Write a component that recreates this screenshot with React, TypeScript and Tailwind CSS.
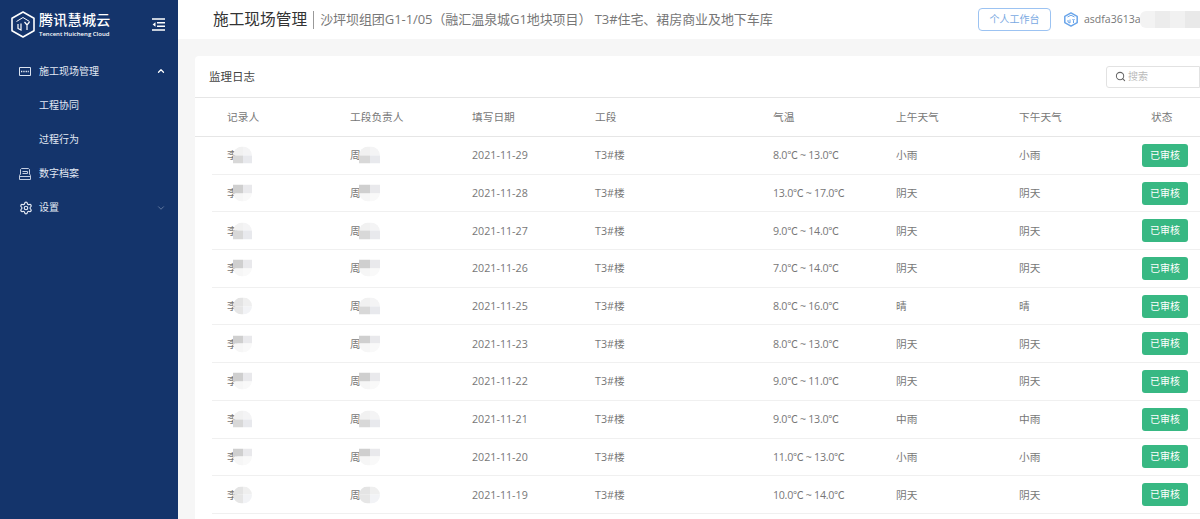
import { ChevronDown, ChevronUp, Search, Settings } from "lucide-react";

const COLUMNS = [
  { label: "记录人", cls: "w-[138px] shrink-0 pl-[15px]" },
  { label: "工段负责人", cls: "w-[122px] shrink-0" },
  { label: "填写日期", cls: "w-[123px] shrink-0" },
  { label: "工段", cls: "w-[178px] shrink-0" },
  { label: "气温", cls: "w-[123px] shrink-0" },
  { label: "上午天气", cls: "w-[123px] shrink-0" },
  { label: "下午天气", cls: "w-[123px] shrink-0" },
];

// names are blotted out in the original, each row has its own mosaic
const BLOTS = {
  a: { shape: "rounded-t-[9px]", cells: ["bg-[#f1f1f1]", "bg-[#f4f4f5]", "bg-[#d8d8d8]", "bg-[#e8e9ed]"] },
  b: { shape: "rounded-b-[9px]", cells: ["bg-[#cfcfcf]", "bg-[#e9e9ec]", "bg-[#f6f6f6]", "bg-[#f9f9f9]"] },
  c: { shape: "rounded-[10px]", cells: ["bg-[#e4e4e4]", "bg-[#efefef]", "bg-[#e6e6e6]", "bg-[#f2f3f6]"] },
};

type BlotKey = keyof typeof BLOTS;

const ROWS: { date: string; temp: string; am: string; pm: string; li: BlotKey; zhou: BlotKey }[] = [
  { date: "2021-11-29", temp: "8.0℃ ~ 13.0℃", am: "小雨", pm: "小雨", li: "a", zhou: "a" },
  { date: "2021-11-28", temp: "13.0℃ ~ 17.0℃", am: "阴天", pm: "阴天", li: "b", zhou: "b" },
  { date: "2021-11-27", temp: "9.0℃ ~ 14.0℃", am: "阴天", pm: "阴天", li: "a", zhou: "a" },
  { date: "2021-11-26", temp: "7.0℃ ~ 14.0℃", am: "阴天", pm: "阴天", li: "b", zhou: "b" },
  { date: "2021-11-25", temp: "8.0℃ ~ 16.0℃", am: "晴", pm: "晴", li: "c", zhou: "a" },
  { date: "2021-11-23", temp: "8.0℃ ~ 13.0℃", am: "阴天", pm: "阴天", li: "b", zhou: "b" },
  { date: "2021-11-22", temp: "9.0℃ ~ 11.0℃", am: "阴天", pm: "阴天", li: "b", zhou: "b" },
  { date: "2021-11-21", temp: "9.0℃ ~ 13.0℃", am: "中雨", pm: "中雨", li: "a", zhou: "a" },
  { date: "2021-11-20", temp: "11.0℃ ~ 13.0℃", am: "小雨", pm: "小雨", li: "b", zhou: "b" },
  { date: "2021-11-19", temp: "10.0℃ ~ 14.0℃", am: "阴天", pm: "阴天", li: "c", zhou: "c" },
];

function Blot({ kind, wide }: { kind: BlotKey; wide?: boolean }) {
  const { shape, cells } = BLOTS[kind];
  return (
    <span
      className={`absolute top-1/2 grid h-[17px] -translate-y-1/2 grid-cols-2 grid-rows-2 overflow-hidden ${shape} ${
        wide ? "left-[9px] w-[21px]" : "left-[6px] w-[19px]"
      }`}
    >
      {cells.map((c, i) => (
        <span key={i} className={c} />
      ))}
    </span>
  );
}

function Logo() {
  return (
    <svg viewBox="0 0 24 27" className="h-[27px] w-[24px] shrink-0" fill="none" stroke="white">
      <path d="M12 1 23 7.2v12.6L12 26 1 19.8V7.2Z" strokeWidth="1.6" strokeLinejoin="round" />
      <path d="M5.5 10.5 12 6.5l6.5 4" strokeWidth="1" />
      <path d="M7 13v4.5l3 1.5V12.5" strokeWidth="1.2" />
      <path d="M13.5 11l2.5 3 2.5-3M16 14v5" strokeWidth="1.2" />
    </svg>
  );
}

function CollapseIcon() {
  return (
    <svg viewBox="0 0 13 13" className="h-[13px] w-[13px]" fill="none" stroke="white" strokeWidth="1.4">
      <path d="M0 1h13M5 4.7h8M5 8.3h8M0 12h13" />
      <path d="M3.5 4.2 .6 6.5l2.9 2.3Z" fill="white" stroke="none" />
    </svg>
  );
}

function SiteIcon() {
  return (
    <svg viewBox="0 0 12 9" className="h-[9px] w-[12px]" fill="none" stroke="#dbe3f0" strokeWidth="1">
      <path d="M.5.5h11v8H.5Z" />
      <path d="M2 4.5h8" strokeWidth="1.6" strokeDasharray="1 .7" stroke="#eef2f8" />
    </svg>
  );
}

function ArchiveIcon() {
  return (
    <svg viewBox="0 0 12 12" className="h-[12px] w-[12px]" fill="none" stroke="#c3cde0" strokeWidth="1">
      <path d="M2.5.5h7l1 1V6l1 1.5v4H.5v-4L1.5 6V1.5Z" strokeLinejoin="round" />
      <path d="M.5 8.5h11M3.5 3.5h5v2h-5" />
    </svg>
  );
}

function AccountIcon() {
  return (
    <svg viewBox="0 0 14 15" className="h-[15px] w-[14px] shrink-0" fill="none" stroke="#6aa5ea">
      <path d="M7 .9 13.2 4.4v6.2L7 14.1 .8 10.600V4.4Z" strokeWidth="1.5" strokeLinejoin="round" />
      <path d="M3.5 5 7 3.2 10.5 5M4 8v2l2 1V7.5M8.5 7l1 1.3L10.5 7M9.500 8.3V11" strokeWidth="1" />
    </svg>
  );
}

function NavItem({ icon, label, arrow }: { icon?: React.ReactNode; label: string; arrow?: React.ReactNode }) {
  return (
    <div className="flex h-[34.2px] items-center pl-[19px] pr-[12px] text-[10px] text-[#e3e9f3]">
      <span className="flex w-[20px] shrink-0 items-center">{icon}</span>
      <span>{label}</span>
      <span className="ml-auto">{arrow}</span>
    </div>
  );
}

export default function App() {
  return (
    <div
      className="flex h-[519px] w-[1200px] overflow-hidden bg-[#f6f6f6] text-[#666]"
      style={{ fontFamily: '"Open Sans", "Noto Sans CJK SC", sans-serif' }}
    >
      <aside className="flex w-[178px] shrink-0 flex-col bg-[#14346b]">
        <div className="flex h-[54px] items-start pl-[11px] pr-[13px] pt-[11px]">
          <Logo />
          <div className="ml-[4px] mt-[1px] text-white">
            <div className="text-[14px] font-medium leading-[15px] tracking-[0.3px]">腾讯慧城云</div>
            <div className="mt-[3px] whitespace-nowrap text-[6px] font-semibold leading-[8px]">Tencent Huicheng Cloud</div>
          </div>
          <span className="ml-auto mt-[7px]">
            <CollapseIcon />
          </span>
        </div>
        <nav>
          <NavItem icon={<SiteIcon />} label="施工现场管理" arrow={<ChevronUp size={10} strokeWidth={3} color="#ffffff" />} />
          <NavItem label="工程协同" />
          <NavItem label="过程行为" />
          <NavItem icon={<ArchiveIcon />} label="数字档案" />
          <NavItem icon={<Settings size={14} color="#e3e9f3" />} label="设置" arrow={<ChevronDown size={10} strokeWidth={2} color="#6f84a8" />} />
        </nav>
      </aside>

      <main className="flex min-w-0 flex-1 flex-col">
        <header className="flex h-[39px] shrink-0 items-center bg-white pl-[35px]">
          <span className="text-[15.7px] leading-none text-[#333]">施工现场管理</span>
          <span className="mx-[6px] h-[18px] w-px bg-[#999]" />
          <span className="whitespace-nowrap text-[13px] tracking-[-0.07px] text-[#777]">沙坪坝组团G1-1/05（融汇温泉城G1地块项目） T3#住宅、裙房商业及地下车库</span>
          <button className="ml-auto flex h-[23px] w-[73px] shrink-0 items-center justify-center rounded-[4px] border border-[#9cc3f2] text-[10px] text-[#7aa9e2]">
            个人工作台
          </button>
          <span className="ml-[13px] flex w-[136px] shrink-0 items-center">
            <AccountIcon />
            <span className="relative ml-[6px] text-[10.5px] text-[#777]">
              asdfa3613a
              <span className="absolute left-[56px] top-[-1px] grid h-[17px] w-[60px] grid-cols-4 overflow-hidden rounded-l-[6px]">
                <span className="bg-[#f3f3f3]" />
                <span className="bg-[#ececec]" />
                <span className="bg-[#f1f1f1]" />
                <span className="bg-[#e9e9e9]" />
              </span>
            </span>
          </span>
        </header>

        <section className="ml-[17px] mt-[17px] flex-1 rounded-tl-[4px] bg-white">
          <div className="flex h-[42px] items-center justify-between border-b border-[#e6e6e6] pl-[14px]">
            <span className="text-[11.5px] text-[#444]">监理日志</span>
            <div className="flex h-[22px] w-[94px] items-center rounded-l-[3px] border border-[#e2e2e2] pl-[8px] text-[10px] text-[#bbb]">
              <Search size={11} color="#666" strokeWidth={2.2} />
              <span className="ml-[2px]">搜索</span>
            </div>
          </div>

          <div className="flex h-[39px] items-center border-b border-[#e6e6e6] pl-[17px] text-[10.7px] text-[#777]">
            {COLUMNS.map((c) => (
              <div key={c.label} className={c.cls}>
                {c.label}
              </div>
            ))}
            <div className="w-[46px] shrink-0 pl-[9px] whitespace-nowrap">状态</div>
          </div>

          <div className="pl-[17px]">
            {ROWS.map((r) => (
              <div key={r.date} className="flex h-[37.7px] items-center border-b border-[#f0f0f0] text-[10.7px] text-[#777]">
                <div className={COLUMNS[0].cls}>
                  <span className="relative">
                    李
                    <Blot kind={r.li} />
                  </span>
                </div>
                <div className={COLUMNS[1].cls}>
                  <span className="relative">
                    周
                    <Blot kind={r.zhou} wide />
                  </span>
                </div>
                <div className={COLUMNS[2].cls}>{r.date}</div>
                <div className={COLUMNS[3].cls}>T3#楼</div>
                <div className={`${COLUMNS[4].cls} tracking-[-0.3px]`}>{r.temp}</div>
                <div className={COLUMNS[5].cls}>{r.am}</div>
                <div className={COLUMNS[6].cls}>{r.pm}</div>
                <button className="flex h-[23px] w-[46px] shrink-0 items-center justify-center rounded-[3px] bg-[#38b883] text-[10px] text-white">
                  已审核
                </button>
              </div>
            ))}
          </div>
        </section>
      </main>
    </div>
  );
}
